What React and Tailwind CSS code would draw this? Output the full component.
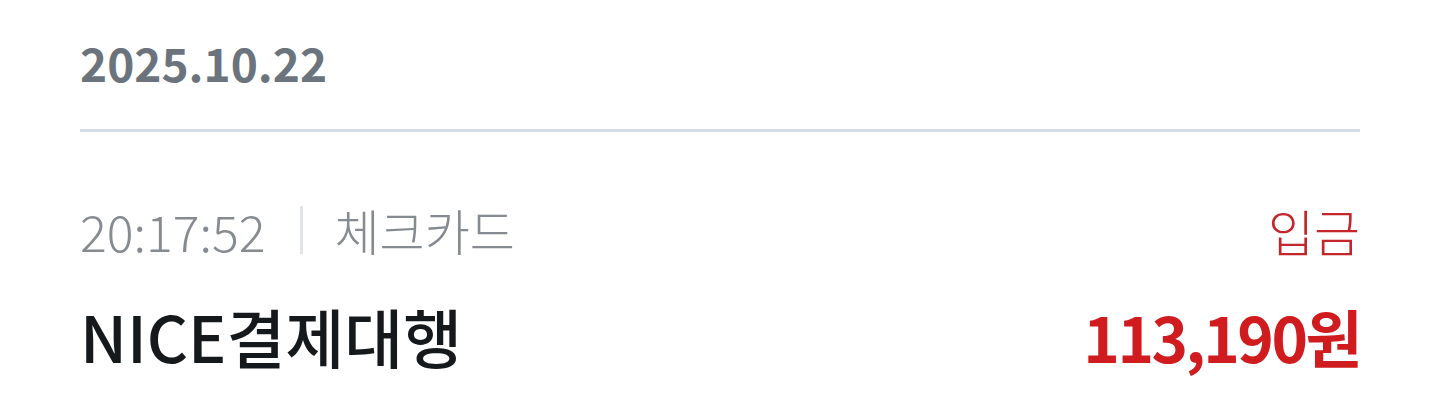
import React from "react"

const App = () => {
  return (
    <div className="w-[1440px] h-[413px] bg-white px-20 font-['Noto_Sans_CJK_KR','Noto_Sans',sans-serif]">
      {/* Date header */}
      <div className="pt-[31px] pb-[36px] border-b-[3px] border-[#d5dde3]">
        <h2 className="text-[46px] leading-[62px] font-bold text-[#6b737c]">2025.10.22</h2>
      </div>

      {/* Transaction */}
      <div className="pt-[68px]">
        <div className="flex justify-between items-center h-[60px]">
          <div className="flex items-center">
            <span className="text-[50px] leading-[60px] font-light text-[#868b91]">20:17:52</span>
            <span className="w-[3px] h-[48px] bg-[#e1e5e8] ml-[34px] mr-[32px]" />
            <span className="text-[49px] leading-[60px] font-light text-[#868b91]">체크카드</span>
          </div>
          <span className="text-[50px] leading-[60px] font-light text-[#c3262b]">입금</span>
        </div>
        <div className="mt-[37px] flex justify-between items-baseline">
          <span className="text-[64px] leading-[76px] font-medium text-[#16191c]">NICE결제대행</span>
          <span className="text-[62px] leading-[76px] font-bold text-[#d01b1f] tracking-[-2.5px]">113,190원</span>
        </div>
      </div>
    </div>
  )
}

export default App
